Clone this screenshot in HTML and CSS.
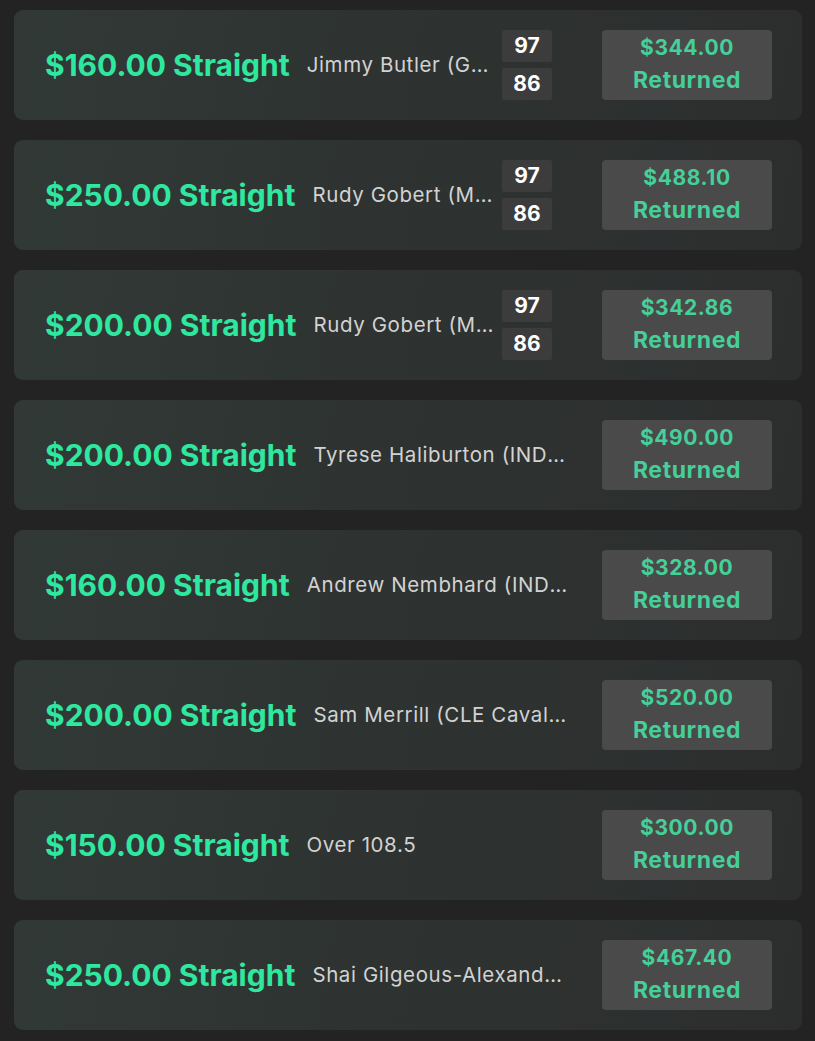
FILE: index.html
```html
<!DOCTYPE html>
<html>
<head>
<meta charset="utf-8">
<link rel="stylesheet" href="styles.css">
</head>
<body>
<div class="list">
  <div class="card">
    <div class="title">$160.00 Straight</div>
    <div class="desc">Jimmy Butler (GSW Warriors)</div>
    <div class="scores"><div class="score">97</div><div class="score">86</div></div>
    <div class="ret"><div class="amt">$344.00</div><div class="lbl">Returned</div></div>
  </div>
  <div class="card">
    <div class="title">$250.00 Straight</div>
    <div class="desc">Rudy Gobert (MIN Timberwolves)</div>
    <div class="scores"><div class="score">97</div><div class="score">86</div></div>
    <div class="ret"><div class="amt">$488.10</div><div class="lbl">Returned</div></div>
  </div>
  <div class="card">
    <div class="title">$200.00 Straight</div>
    <div class="desc">Rudy Gobert (MIN Timberwolves)</div>
    <div class="scores"><div class="score">97</div><div class="score">86</div></div>
    <div class="ret"><div class="amt">$342.86</div><div class="lbl">Returned</div></div>
  </div>
  <div class="card">
    <div class="title">$200.00 Straight</div>
    <div class="desc noscore">Tyrese Haliburton (IND Pacers)</div>
    <div class="ret"><div class="amt">$490.00</div><div class="lbl">Returned</div></div>
  </div>
  <div class="card">
    <div class="title">$160.00 Straight</div>
    <div class="desc noscore">Andrew Nembhard (IND Pacers)</div>
    <div class="ret"><div class="amt">$328.00</div><div class="lbl">Returned</div></div>
  </div>
  <div class="card">
    <div class="title">$200.00 Straight</div>
    <div class="desc noscore">Sam Merrill (CLE Cavaliers)</div>
    <div class="ret"><div class="amt">$520.00</div><div class="lbl">Returned</div></div>
  </div>
  <div class="card">
    <div class="title">$150.00 Straight</div>
    <div class="desc noscore">Over 108.5</div>
    <div class="ret"><div class="amt">$300.00</div><div class="lbl">Returned</div></div>
  </div>
  <div class="card">
    <div class="title">$250.00 Straight</div>
    <div class="desc noscore">Shai Gilgeous-Alexander (OKC Thunder)</div>
    <div class="ret"><div class="amt">$467.40</div><div class="lbl">Returned</div></div>
  </div>
</div>
</body>
</html>
```

FILE: styles.css
```css
html, body {
  margin: 0;
  padding: 0;
  background: #232323;
}
body {
  font-family: Inter, "Noto Sans", "Liberation Sans", sans-serif;
}
.list {
  display: flex;
  flex-direction: column;
  gap: 20px;
  padding: 10px 13px 11px 14px;
}
.card {
  height: 110px;
  box-sizing: border-box;
  border-radius: 9px;
  background: linear-gradient(100deg, #313936 0%, #2e3331 45%, #2c2e2e 100%);
  display: flex;
  align-items: center;
  padding: 0 30px 0 31px;
}
.title {
  flex: none;
  color: #2fe8a0;
  font-weight: 700;
  font-size: 30px;
  line-height: 36px;
  letter-spacing: 0;
  white-space: nowrap;
}
.desc {
  flex: 1;
  min-width: 0;
  margin-left: 17px;
  color: #d2d2d2;
  font-size: 20.5px;
  line-height: 26px;
  white-space: nowrap;
  overflow: hidden;
  text-overflow: ellipsis;
  letter-spacing: 0.6px;
}
.desc.noscore {
  margin-right: 34px;
}
.scores {
  flex: none;
  display: flex;
  flex-direction: column;
  gap: 6px;
  margin-left: 5px;
  margin-right: 50px;
}
.score {
  width: 50px;
  height: 32px;
  background: #3c3c3c;
  border-radius: 2px;
  color: #ffffff;
  font-weight: 700;
  font-size: 21px;
  line-height: 22px;
  display: flex;
  align-items: center;
  justify-content: center;
}
.ret {
  flex: none;
  width: 170px;
  height: 70px;
  background: #4a4a4a;
  border-radius: 4px;
  color: #45cf99;
  font-weight: 700;
  display: flex;
  flex-direction: column;
  align-items: center;
  justify-content: center;
  gap: 8px;
}
.amt {
  font-size: 21px;
  line-height: 22px;
  letter-spacing: 0.6px;
}
.lbl {
  font-size: 23px;
  line-height: 26px;
  letter-spacing: 0.6px;
}
```
